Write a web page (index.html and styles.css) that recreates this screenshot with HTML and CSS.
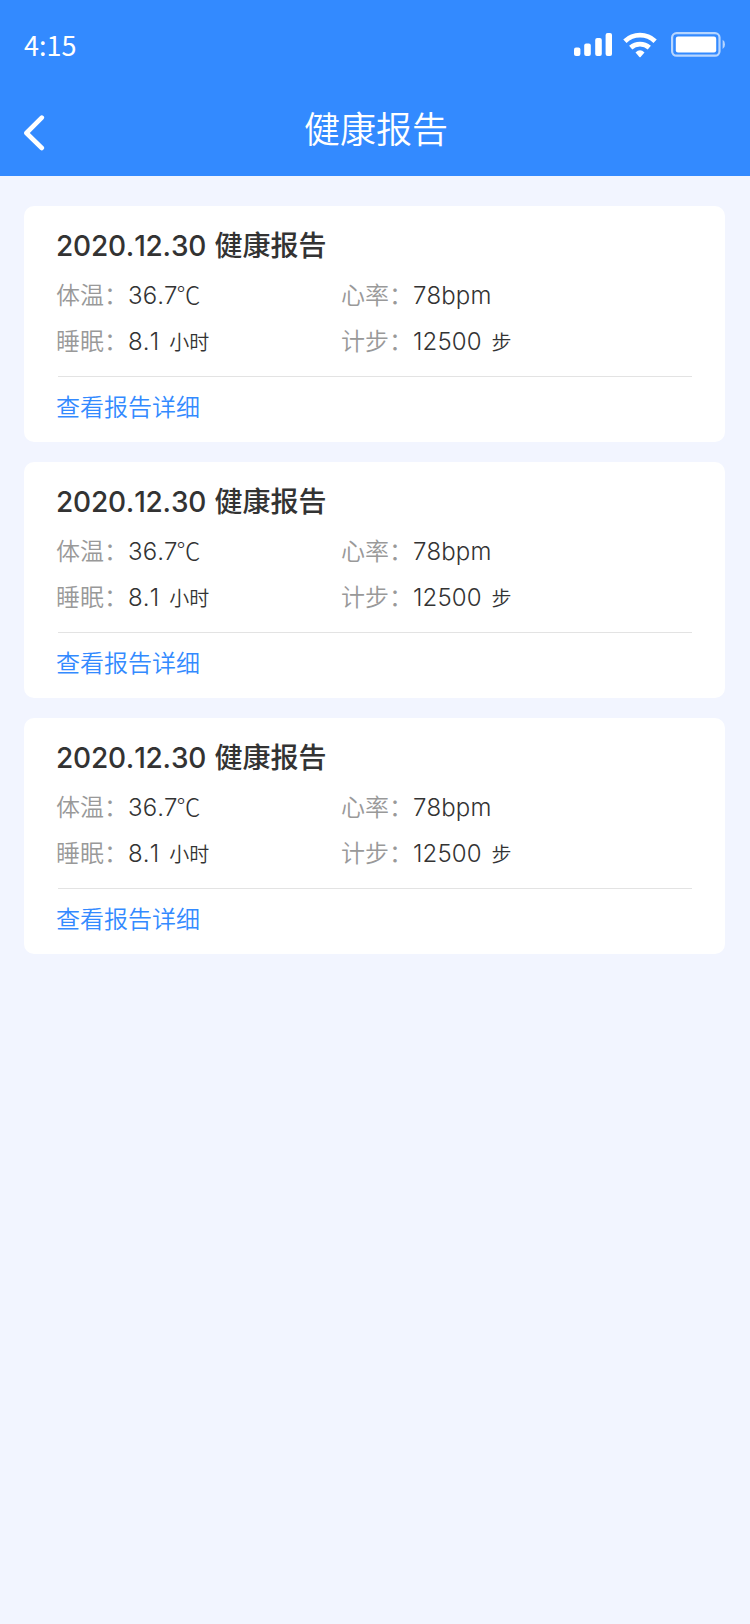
FILE: index.html
```html
<!DOCTYPE html>
<html lang="zh-CN">
<head>
    <meta charset="UTF-8">
    <meta name="viewport" content="width=device-width, initial-scale=1.0">
    <title>健康报告</title>
    <link rel="stylesheet" href="styles.css">
</head>
<body>
    <header class="header">
        <div class="status-bar">
            <span class="status-time">4:15</span>
            <div class="status-icons">
                <svg class="icon-signal" width="38" height="23" viewBox="0 0 38 23" fill="#fff">
                    <rect x="0" y="14.5" width="6.4" height="8.5" rx="2"/>
                    <rect x="10.2" y="10.6" width="6.6" height="12.4" rx="2"/>
                    <rect x="21.2" y="5" width="6.6" height="18" rx="2"/>
                    <rect x="31.6" y="0" width="6.4" height="23" rx="2"/>
                </svg>
                <svg class="icon-wifi" width="34" height="26" viewBox="0 0 34 26" fill="none" stroke="#fff" stroke-width="4.8">
                    <path d="M1.9 9.2a22 22 0 0 1 30.2 0"/>
                    <path d="M7.7 15.6a14 14 0 0 1 18.6 0"/>
                    <path d="M12.5 20.4Q17 16 21.5 20.4L17.6 24.9Q17 25.4 16.4 24.9Z" fill="#fff" stroke="none"/>
                </svg>
                <svg class="icon-battery" width="54" height="25" viewBox="0 0 54 25">
                    <rect x="1.1" y="1.1" width="47.4" height="22.6" rx="4.5" fill="none" stroke="#fff" stroke-opacity=".65" stroke-width="2.2"/>
                    <rect x="4.8" y="4.6" width="40.4" height="15.8" rx="2.2" fill="#fff"/>
                    <path d="M51.6 7.8q2.4 1.4 2.4 4.6t-2.4 4.6z" fill="#fff" fill-opacity=".65"/>
                </svg>
            </div>
        </div>
        <div class="nav-bar">
            <svg class="icon-back" width="22" height="36" viewBox="0 0 22 36" fill="none" stroke="#fff" stroke-width="4.6" stroke-linecap="round" stroke-linejoin="round">
                <path d="M17.8 2.6L2.4 18L17.8 33"/>
            </svg>
            <h1 class="nav-title">健康报告</h1>
        </div>
    </header>

    <main class="report-list">
        <section class="report-card">
            <h2 class="report-title">2020.12.30 <span class="report-name">健康报告</span></h2>
            <div class="report-data">
                <div class="item"><span class="label">体温：</span><span class="value">36.7<span class="degree">℃</span></span></div>
                <div class="item"><span class="label">心率：</span><span class="value">78bpm</span></div>
                <div class="item"><span class="label">睡眠：</span><span class="value">8.1</span><span class="unit">小时</span></div>
                <div class="item"><span class="label">计步：</span><span class="value">12500</span><span class="unit">步</span></div>
            </div>
            <a class="report-link">查看报告详细</a>
        </section>

        <section class="report-card">
            <h2 class="report-title">2020.12.30 <span class="report-name">健康报告</span></h2>
            <div class="report-data">
                <div class="item"><span class="label">体温：</span><span class="value">36.7<span class="degree">℃</span></span></div>
                <div class="item"><span class="label">心率：</span><span class="value">78bpm</span></div>
                <div class="item"><span class="label">睡眠：</span><span class="value">8.1</span><span class="unit">小时</span></div>
                <div class="item"><span class="label">计步：</span><span class="value">12500</span><span class="unit">步</span></div>
            </div>
            <a class="report-link">查看报告详细</a>
        </section>

        <section class="report-card">
            <h2 class="report-title">2020.12.30 <span class="report-name">健康报告</span></h2>
            <div class="report-data">
                <div class="item"><span class="label">体温：</span><span class="value">36.7<span class="degree">℃</span></span></div>
                <div class="item"><span class="label">心率：</span><span class="value">78bpm</span></div>
                <div class="item"><span class="label">睡眠：</span><span class="value">8.1</span><span class="unit">小时</span></div>
                <div class="item"><span class="label">计步：</span><span class="value">12500</span><span class="unit">步</span></div>
            </div>
            <a class="report-link">查看报告详细</a>
        </section>
    </main>
</body>
</html>
```

FILE: styles.css
```css
* {
    box-sizing: border-box;
    margin: 0;
    padding: 0;
}

body {
    min-height: 1624px;
    background: #f2f5ff;
    color: #333;
    font-family: Inter, "Noto Sans CJK SC", sans-serif;
    font-size: 24px;
    font-weight: 350;
}

/* header */
.header {
    height: 176px;
    background: #338aff;
    color: #fff;
}

.status-bar {
    display: flex;
    align-items: center;
    justify-content: space-between;
    height: 88px;
    padding: 0 25px 0 24px;
}

.status-time {
    padding-top: 1px;
    font-family: "Noto Sans CJK SC", sans-serif;
    font-size: 27px;
    font-weight: 400;
    line-height: 40px;
}

.status-icons {
    display: flex;
    align-items: center;
    padding-top: 1px;
}

.icon-wifi {
    margin-left: 11px;
}

.icon-battery {
    margin-left: 14px;
}

.nav-bar {
    display: grid;
    grid-template-columns: 24px 1fr 24px;
    align-items: center;
    height: 88px;
    padding: 0 24px;
}

.icon-back {
    margin-top: 1px;
}

.nav-title {
    font-size: 36px;
    font-weight: 350;
    line-height: 48px;
    text-align: center;
    margin-top: -4px;
    padding-left: 2px;
}

/* report cards */
.report-list {
    display: flex;
    flex-direction: column;
    gap: 20px;
    padding: 30px 25px 0 24px;
}

.report-card {
    height: 236px;
    padding: 18px 33px 0 32px;
    background: #fff;
    border-radius: 10px;
}

.report-title {
    font-size: 28px;
    font-weight: 450;
    line-height: 40px;
    font-kerning: none;
    letter-spacing: -0.2px;
    word-spacing: 1px;
}

.report-name {
    font-family: "Noto Sans CJK SC", sans-serif;
    font-weight: 500;
    letter-spacing: 0;
}

.report-data {
    display: grid;
    grid-template-columns: 285px 1fr;
    grid-auto-rows: 46px;
    height: 111px;
    padding-top: 7px;
    margin-left: 2px;
    border-bottom: 1px solid #e3e3e3;
}

.item {
    display: flex;
    align-items: baseline;
    line-height: 46px;
    margin-left: -2px;
}

.label {
    width: 72px;
    color: #999;
}

.value {
    font-kerning: none;
    letter-spacing: 0.1px;
}

.degree {
    margin-left: -1px;
    font-family: "Noto Sans CJK SC", sans-serif;
    font-weight: 300;
    line-height: 1;
}

.unit {
    margin-left: 10px;
    font-size: 20px;
    line-height: 1;
}

.report-link {
    display: block;
    line-height: 61px;
    color: #338aff;
}
```
